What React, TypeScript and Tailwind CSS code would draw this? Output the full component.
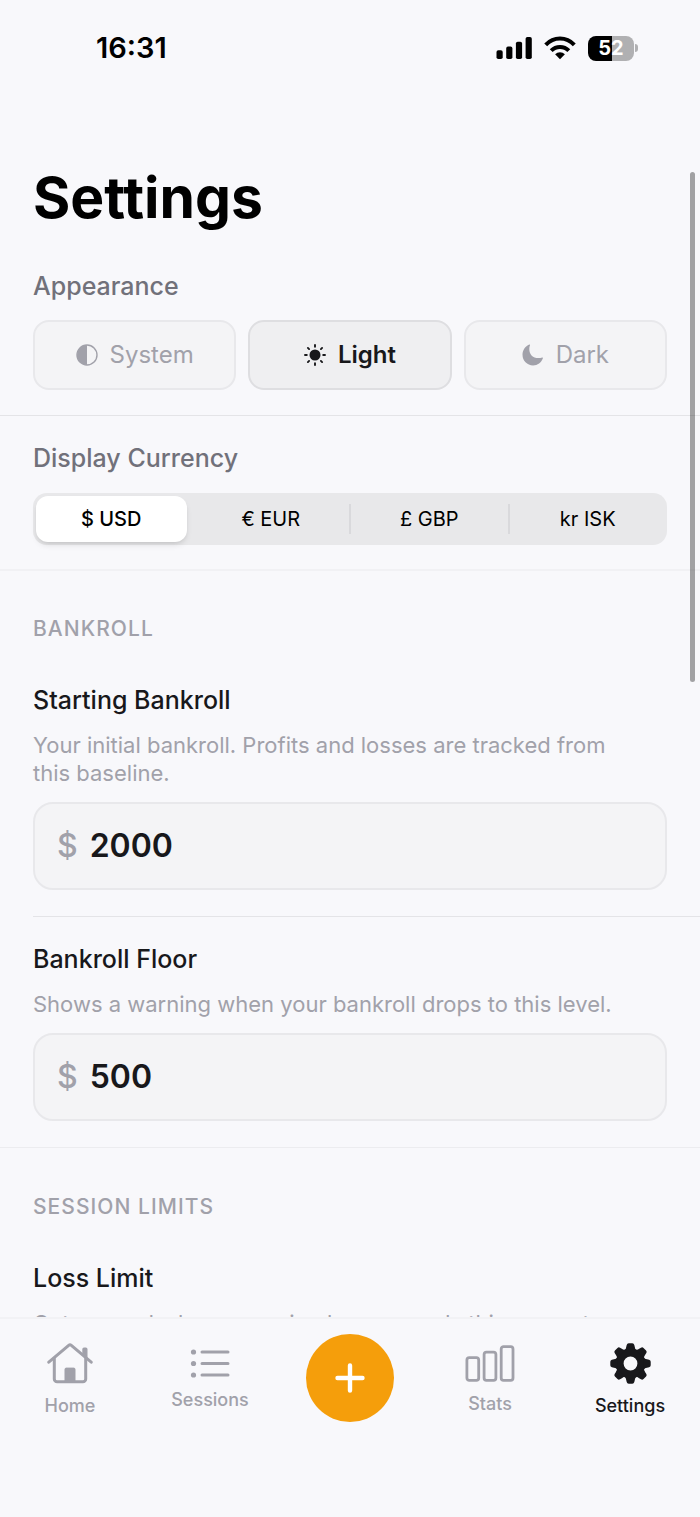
import React, { useState } from 'react';

const SignalIcon = () => (
    <svg width="36" height="22" viewBox="0 0 36 22" fill="currentColor" aria-hidden="true">
        <rect x="0.5" y="13.2" width="6.2" height="8.8" rx="1.8" />
        <rect x="10.2" y="9.6" width="6.2" height="12.4" rx="1.8" />
        <rect x="19.9" y="4.8" width="6.2" height="17.2" rx="1.8" />
        <rect x="29.6" y="0" width="6.2" height="22" rx="1.8" />
    </svg>
);

const WifiIcon = () => (
    <svg width="32" height="24" viewBox="0 0 32 24" fill="none" stroke="currentColor" strokeWidth="4" aria-hidden="true">
        <path d="M1.700 8.900C5.400 5 10.400 2.600 16 2.600S26.600 5 30.300 8.900" />
        <path d="M7.200 14.600A12.300 12.300 0 0 1 24.800 14.600" />
        <path d="M16 23.200l-4.900-4.900a7 7 0 0 1 9.800 0z" fill="currentColor" stroke="none" />
    </svg>
);

const HalfCircleIcon = () => (
    <svg width="22" height="22" viewBox="0 0 22 22" fill="none" aria-hidden="true">
        <circle cx="11" cy="11" r="10" stroke="currentColor" strokeWidth="1.400" />
        <path d="M11 1a10 10 0 0 0 0 20z" fill="currentColor" />
    </svg>
);

const SunIcon = () => (
    <svg width="22" height="22" viewBox="0 0 22 22" stroke="currentColor" strokeWidth="1.900" strokeLinecap="round" aria-hidden="true">
        <circle cx="11" cy="11" r="5.500" fill="currentColor" stroke="none" />
        <path d="M11 1v1.800M11 19.200v1.800M1 11h1.800M19.200 11h1.800M3.900 3.900l1.200 1.200M16.900 16.900l1.200 1.200M3.900 18.100l1.200-1.200M16.900 5.100l1.200-1.200" />
    </svg>
);

const MoonIcon = () => (
    <svg width="22" height="22" viewBox="0 0 22 22" fill="currentColor" aria-hidden="true">
        <path d="M7.300.6c.5-.2.900.2.700.7-.5 1.200-.7 2.300-.7 3.700 0 5.600 3.500 9.100 9.100 9.100 1.400 0 2.700-.2 3.800-.6.5-.2.900.2.700.7C19.300 18.700 15.500 21.400 11.100 21.400 5.100 21.400.5 16.700.5 10.800.5 6.300 3.200 2.300 7.300.6z" />
    </svg>
);

const HomeIcon = () => (
    <svg width="46" height="41" viewBox="0 0 46 41" fill="none" stroke="currentColor" strokeLinecap="round" strokeLinejoin="round" aria-hidden="true">
        <path d="M1.800 19.200L21.700 2.300a2 2 0 0 1 2.600 0L44.200 19.200" strokeWidth="3" />
        <path d="M7.300 15.500V36a2.800 2.800 0 0 0 2.800 2.800h25.800a2.800 2.800 0 0 0 2.800-2.800V15.500" strokeWidth="3" />
        <path d="M36 10.500V6.200a1 1 0 0 1 1-1h1.800a1 1 0 0 1 1 1v8z" fill="currentColor" strokeWidth="1.400" />
        <path d="M18 38.500V26.300a1.200 1.200 0 0 1 1.200-1.200h7.600a1.200 1.200 0 0 1 1.200 1.200v12.200z" fill="currentColor" strokeWidth="1" />
    </svg>
);

const ListIcon = () => (
    <svg width="40" height="29" viewBox="0 0 40 29" fill="currentColor" aria-hidden="true">
        <circle cx="3.500" cy="3" r="2.600" />
        <circle cx="3.500" cy="14.500" r="2.600" />
        <circle cx="3.500" cy="26" r="2.600" />
        <path d="M12 3h26M12 14.500h26M12 26h26" stroke="currentColor" strokeWidth="3" strokeLinecap="round" />
    </svg>
);

const BarsIcon = () => (
    <svg width="50" height="37" viewBox="0 0 50 37" fill="none" stroke="currentColor" strokeWidth="2.800" aria-hidden="true">
        <rect x="1.900" y="12.600" width="11.800" height="22.800" rx="2.400" />
        <rect x="19.100" y="7.100" width="11.800" height="28.300" rx="2.400" />
        <rect x="36.200" y="1.600" width="11.800" height="33.800" rx="2.400" />
    </svg>
);

// One tooth, repeated every 45 degrees around the ring
const GearIcon = () => (
    <svg width="41" height="41" viewBox="-20.5 -20.5 41 41" fill="currentColor" aria-hidden="true">
        <circle r="10.900" fill="none" stroke="currentColor" strokeWidth="8" />
        {[0, 45, 90, 135, 180, 225, 270, 315].map(angle => (
            <path
                key={angle}
                transform={`rotate(${angle})`}
                d="M-5.800-13.400C-4.800-14-4.600-15-4.300-16.500L-3.800-18.600Q-3.400-20.200-1.800-20.200H1.800Q3.400-20.200 3.800-18.600L4.300-16.500C4.600-15 4.800-14 5.800-13.400z"
            />
        ))}
    </svg>
);

const PlusIcon = () => (
    <svg width="30" height="30" viewBox="0 0 30 30" stroke="currentColor" strokeWidth="4.400" strokeLinecap="round" aria-hidden="true">
        <path d="M15 2.500v25M2.500 15h25" />
    </svg>
);

const appearances: { id: string; icon: React.FC }[] = [
    { id: 'System', icon: HalfCircleIcon },
    { id: 'Light', icon: SunIcon },
    { id: 'Dark', icon: MoonIcon },
];

const currencies = ['$ USD', '€ EUR', '£ GBP', 'kr ISK'];

const StatusBar = () => (
    <header className="flex h-24 shrink-0 items-center justify-between pr-[62px] pl-24 text-black">
        <span className="text-[29px] font-semibold">16:31</span>
        <div className="flex items-center gap-3">
            <SignalIcon />
            <WifiIcon />
            <div className="flex items-center gap-px">
                <span className="flex h-[25px] w-[46px] items-center justify-center rounded-lg bg-linear-to-r from-black from-52% to-[#b0b0b2] to-52% text-xl font-bold text-white">
                    52
                </span>
                <span className="h-2 w-[3px] rounded-r-full bg-[#b0b0b2]" />
            </div>
        </div>
    </header>
);

interface FieldTextProps {
    id: string;
    label: React.ReactNode;
    hint: string;
}

const FieldText: React.FC<FieldTextProps> = ({ id, label, hint }) => (
    <>
        <h3 className="text-[25px] leading-8 font-medium text-[#18181b]">{label}</h3>
        <p id={`${id}-hint`} className="mt-[15px] pr-6 text-[22px] leading-7 text-[#a1a1aa]">{hint}</p>
    </>
);

interface AmountFieldProps {
    id: string;
    label: string;
    hint: string;
    initial: string;
}

const AmountField: React.FC<AmountFieldProps> = ({ id, label, hint, initial }) => {
    const [value, setValue] = useState(initial);

    return (
        <div>
            <FieldText id={id} label={<label htmlFor={id}>{label}</label>} hint={hint} />
            <div className="mt-[15px] flex h-[88px] items-center gap-3 rounded-[20px] border-2 border-[#e8e8eb] bg-[#f4f4f6] px-[22px] text-[32px] font-semibold">
                <span className="font-medium text-[#a1a1aa]">$</span>
                <input
                    id={id}
                    type="text"
                    inputMode="numeric"
                    aria-describedby={`${id}-hint`}
                    value={value}
                    onChange={e => setValue(e.target.value)}
                    className="min-w-0 flex-1 bg-transparent text-[#18181b] outline-none"
                />
            </div>
        </div>
    );
};

const TabBar = () => {
    const tab = 'flex flex-col items-center gap-[10px] text-lg leading-6 font-medium';

    return (
        <nav className="grid h-[200px] shrink-0 grid-cols-5 items-start border-t-2 border-[#f2f2f5] bg-[#f8f8fb] text-[#a1a1aa]">
            <a href="#home" className={`${tab} pt-6`}>
                <HomeIcon />
                Home
            </a>
            <a href="#sessions" className={`${tab} pt-[30px]`}>
                <ListIcon />
                Sessions
            </a>
            <button
                aria-label="Add session"
                className="mt-[15px] flex size-[88px] items-center justify-center justify-self-center rounded-full bg-[#f59e0b] text-white"
            >
                <PlusIcon />
            </button>
            <a href="#stats" className={`${tab} pt-[26px]`}>
                <BarsIcon />
                Stats
            </a>
            <a href="#settings" aria-current="page" className={`${tab} pt-6 text-[#18181b]`}>
                <GearIcon />
                Settings
            </a>
        </nav>
    );
};

export default function App() {
    const [appearance, setAppearance] = useState('Light');
    const [currency, setCurrency] = useState('$ USD');

    return (
        <div className="relative flex h-screen flex-col overflow-hidden bg-[#f8f8fb] font-['Inter',sans-serif]">
            <StatusBar />

            <main className="min-h-0 flex-1 overflow-hidden">
                <h1 className="px-[33px] pt-[66px] text-[57px] leading-[72px] font-bold text-black">Settings</h1>

                <section className="border-b border-[#e4e4e7] px-[33px] pt-9 pb-[25px]">
                    <h2 id="appearance" className="text-[25px] leading-8 font-medium text-[#71717a]">Appearance</h2>
                    <div role="group" aria-labelledby="appearance" className="mt-[18px] grid grid-cols-3 gap-3">
                        {appearances.map(({ id, icon: Icon }) => (
                            <button
                                key={id}
                                aria-pressed={appearance === id}
                                onClick={() => setAppearance(id)}
                                className={`flex h-[70px] items-center justify-center gap-3 rounded-2xl border-2 text-2xl ${
                                    appearance === id
                                        ? 'border-[#dedee1] bg-[#efeff1] font-semibold text-[#18181b]'
                                        : 'border-[#e8e8eb] bg-[#f4f4f6] text-[#a1a1aa]'
                                }`}
                            >
                                <Icon />
                                {id}
                            </button>
                        ))}
                    </div>
                </section>

                <section className="border-b-2 border-[#f1f1f4] px-[33px] pt-[26px] pb-6">
                    <h2 id="currency" className="text-[25px] leading-8 font-medium text-[#71717a]">Display Currency</h2>
                    <div
                        role="group"
                        aria-labelledby="currency"
                        className="mt-[19px] grid h-[52px] grid-cols-4 rounded-[14px] bg-[#e8e8ea] py-[3px]"
                    >
                        {currencies.map((c, i) => (
                            <div key={c} className="relative grid">
                                {i > 1 && <span className="absolute inset-y-2 -left-px w-[2px] bg-[#d9d9dc]" />}
                                <button
                                    aria-pressed={currency === c}
                                    onClick={() => setCurrency(c)}
                                    className={`rounded-xl text-xl text-black ${
                                        currency === c ? 'mr-[5px] ml-[3px] bg-white font-medium shadow-md' : ''
                                    }`}
                                >
                                    {c}
                                </button>
                            </div>
                        ))}
                    </div>
                </section>

                <section className="border-b border-[#ececef] pt-11 pb-[26px] pl-[33px]">
                    <h2 className="pb-[41px] text-[21px] leading-7 font-medium tracking-wider text-[#a1a1aa]">BANKROLL</h2>
                    <div className="border-b border-[#e4e4e7] pr-[33px] pb-[26px]">
                        <AmountField
                            id="starting-bankroll"
                            label="Starting Bankroll"
                            hint="Your initial bankroll. Profits and losses are tracked from this baseline."
                            initial="2000"
                        />
                    </div>
                    <div className="pt-[26px] pr-[33px]">
                        <AmountField
                            id="bankroll-floor"
                            label="Bankroll Floor"
                            hint="Shows a warning when your bankroll drops to this level."
                            initial="500"
                        />
                    </div>
                </section>

                <section className="px-[33px] pt-[45px]">
                    <h2 className="pb-[41px] text-[21px] leading-7 font-medium tracking-wider text-[#a1a1aa]">SESSION LIMITS</h2>
                    <FieldText
                        id="loss-limit"
                        label="Loss Limit"
                        hint="Get warned when a session loss exceeds this amount."
                    />
                </section>
            </main>

            {/* Scroll indicator */}
            <div className="absolute top-[172px] right-[5px] h-[510px] w-[5px] rounded-full bg-black/35" />

            <TabBar />
        </div>
    );
}
